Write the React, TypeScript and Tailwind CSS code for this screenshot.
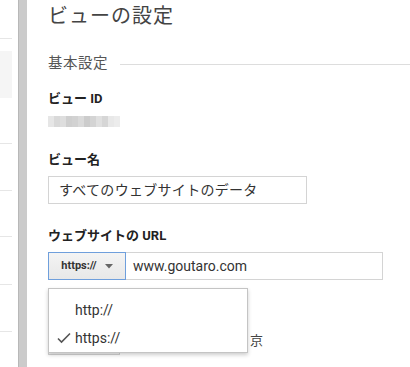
import React from "react";

const font = { fontFamily: "Roboto, 'Noto Sans CJK JP', sans-serif" };

function Sidebar() {
  return (
    <div className="w-[12px] shrink-0 flex flex-col bg-white">
      <div className="h-[39px] border-b border-[#e6e6e6]" />
      <div className="h-[12px]" />
      <div className="h-[47px] bg-[#f5f5f5]" />
      <div className="h-[46px] border-b border-[#e6e6e6]" />
      <div className="h-[47px] border-b border-[#e6e6e6]" />
      <div className="h-[46px] border-b border-[#e6e6e6]" />
      <div className="h-[48px] border-b border-[#e6e6e6]" />
      <div className="h-[47px] border-b border-[#e6e6e6]" />
    </div>
  );
}

function BlurId() {
  const shades = ["#e6e6e6", "#d9d9d9", "#dedede", "#cfcfcf", "#d2d2d2", "#dadada", "#cccccc", "#d4d4d4", "#e0e0e0", "#d6d6d6", "#e8e8e8", "#ececec"];
  return (
    <div className="flex h-[11px] w-[72px] blur-[0.6px]">
      {shades.map((c, i) => (
        <div key={i} className="h-full w-[6px]" style={{ background: c }} />
      ))}
    </div>
  );
}

export default function App() {
  return (
    <div className="relative flex h-[367px] w-[410px] overflow-hidden bg-white text-[#333]" style={font}>
      <Sidebar />
      <div className="w-[6px] shrink-0 bg-white" />
      <div className="w-[9px] shrink-0 bg-[#cbcbcb] border-l border-[#b8b8b8]" />
      <div className="flex-1 pl-[21px] pt-[2px] flex flex-col">
        <div className="text-[20px] leading-[28px] text-[#444] tracking-[1px]">ビューの設定</div>
        <div className="mt-[24px] flex items-center">
          <div className="text-[14.5px] leading-[20px] text-[#555] tracking-[0.5px]">基本設定</div>
          <div className="ml-[12px] h-px flex-1 bg-[#dddddd]" />
        </div>
        <div className="mt-[16px] text-[13px] leading-[18px] font-bold text-[#222]">ビュー ID</div>
        <div className="mt-[8px]">
          <BlurId />
        </div>
        <div className="mt-[24px] text-[13px] leading-[18px] font-bold text-[#222]">ビュー名</div>
        <div className="mt-[7px] flex h-[28px] w-[259px] items-center border border-[#d4d4d4] pl-[10px] text-[14px] text-[#333] tracking-[0.3px]">
          すべてのウェブサイトのデータ
        </div>
        <div className="mt-[23px] text-[13px] leading-[18px] font-bold text-[#222]">ウェブサイトの URL</div>
        <div className="mt-[7px] flex h-[28px] w-[335px]">
          <div className="flex w-[78px] items-center justify-center gap-[8px] border border-[#6f9fdc] bg-gradient-to-b from-[#f4f4f4] to-[#e8e8e8] text-[11px] font-bold text-[#333]">
            <span>https://</span>
            <svg width="8" height="5" viewBox="0 0 8 5"><path d="M0 0 L8 0 L4 4.5 Z" fill="#666" /></svg>
          </div>
          <div className="flex flex-1 items-center border border-l-0 border-[#d4d4d4] pl-[7px] text-[14px] text-[#333]">
            www.goutaro.com
          </div>
        </div>
        <div className="mt-[47px] flex items-center">
          <div className="h-[28px] w-[72px] border border-[#d4d4d4] bg-[#f5f5f5]" />
          <div className="ml-[130px] text-[13px] text-[#444]">京</div>
        </div>
      </div>
      <div className="absolute left-[48px] top-[288px] w-[200px] border border-[#c4c4c4] bg-white pt-[7px] shadow-[0_2px_4px_rgba(0,0,0,0.2)] text-[14px] text-[#333]">
        <div className="flex h-[28px] items-center pl-[26px]">http://</div>
        <div className="flex h-[28px] items-center pl-[8px]">
          <svg width="14" height="12" viewBox="0 0 14 12" className="mr-[4px]">
            <path d="M1 6.5 L4.5 10 L13 1.5" stroke="#555" strokeWidth="1.6" fill="none" />
          </svg>
          https://
        </div>
      </div>
    </div>
  );
}
